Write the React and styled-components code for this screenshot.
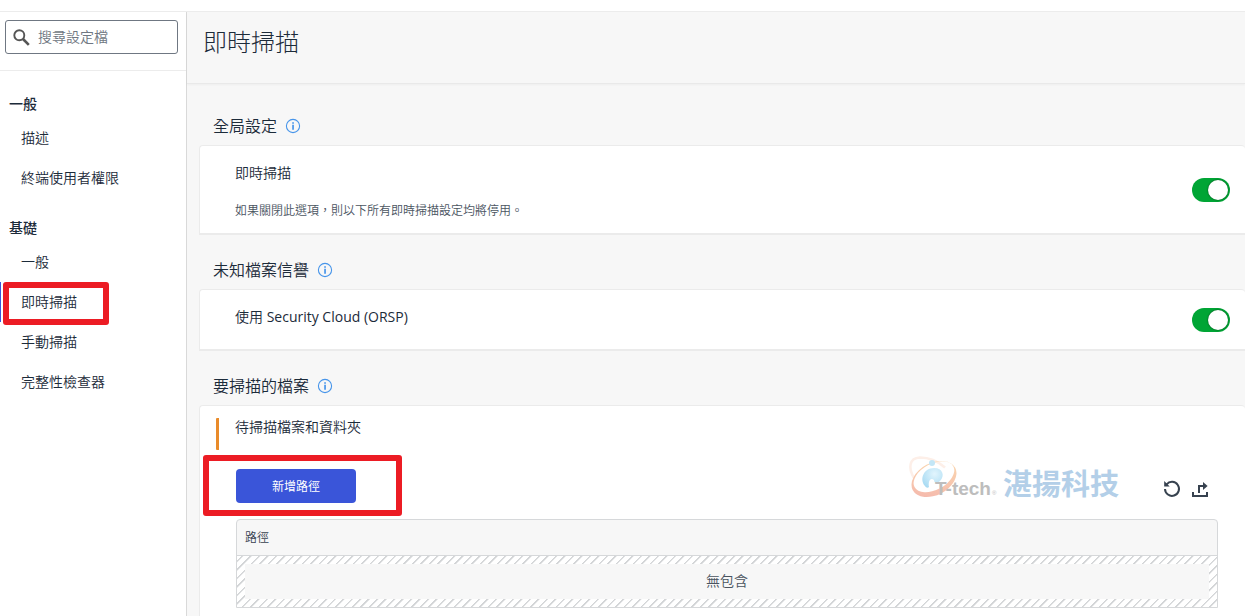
import React, { useState } from "react";
import styled, { createGlobalStyle } from "styled-components";

const GlobalStyle = createGlobalStyle`
    * {
        box-sizing: border-box;
    }
    body {
        margin: 0;
        background-color: white;
        color: #1c2b3a;
        font-family: "Open Sans", "Noto Sans CJK TC", sans-serif;
        font-size: 14px;
        font-weight: 350;
        line-height: 20px;
    }
    button, input {
        font-family: inherit;
    }
`;

const Container = styled.div`
    height: 100vh;
    display: flex;
    flex-direction: column;
    overflow: hidden;
`;

const TopBar = styled.div`
    flex: none;
    height: 12px;
    border-bottom: 1px solid #ececec;
`;

const Wrapper = styled.div`
    flex: 1;
    min-height: 0;
    display: flex;
`;

const Sidebar = styled.aside`
    flex: none;
    width: 187px;
    border-right: 1px solid #d9d9d9;
`;

const SearchBox = styled.div`
    padding: 8px 8px 16px 5px;
    border-bottom: 1px solid #ececec;
`;

const SearchField = styled.label`
    height: 34px;
    display: flex;
    align-items: center;
    gap: 8px;
    padding: 0 7px;
    border: 1px solid #6f7782;
    border-radius: 3px;
`;

const SearchInput = styled.input`
    flex: 1;
    min-width: 0;
    padding: 0 0 2px;
    border: none;
    outline: none;
    background: none;
    font-size: 14px;
    font-weight: 350;
    &::placeholder {
        color: #6f7782;
        opacity: 1;
    }
`;

const Nav = styled.nav`
    display: flex;
    flex-direction: column;
    gap: 16px;
    padding-top: 19px;
`;

const GroupTitle = styled.h2`
    margin: 0;
    padding-left: 9px;
    font-size: 14px;
    line-height: 28px;
    font-weight: 500;
`;

const List = styled.ul`
    margin: 0;
    padding: 0;
    list-style: none;
`;

const Item = styled.li`
    position: relative;
    border-left: 1px solid ${(props) => (props.$active ? "#3a55d9" : "transparent")};
`;

const ItemLink = styled.a`
    display: block;
    padding-left: 20px;
    line-height: 40px;
    color: inherit;
    text-decoration: none;
`;

const Mark = styled.span`
    position: absolute;
    top: ${(props) => props.$top}px;
    left: ${(props) => props.$left}px;
    width: ${(props) => props.$width}px;
    height: ${(props) => props.$height}px;
    border: 6px solid #ec1c24;
    border-radius: 3px;
    pointer-events: none;
`;

const Main = styled.main`
    flex: 1;
    min-width: 0;
    background-color: #f7f7f7;
`;

const Header = styled.header`
    height: 72px;
    padding: 14px 16px;
    border-bottom: 1px solid #e9e9e9;
    box-shadow: 0 1px 2px rgba(0, 0, 0, 0.04);
`;

const Title = styled.h1`
    margin: 0;
    font-size: 24px;
    line-height: 32px;
    font-weight: 300;
`;

const Content = styled.div`
    display: flex;
    flex-direction: column;
    gap: 24px;
    padding: 31px 0 0 12px;
`;

const SectionHead = styled.div`
    display: flex;
    align-items: center;
    gap: 8px;
    margin-bottom: 8px;
    padding-left: 14px;
`;

const SectionTitle = styled.h2`
    margin: 0;
    font-size: 16px;
    line-height: 22px;
    font-weight: 350;
`;

const Card = styled.div`
    position: relative;
    background-color: white;
    border: 1px solid #ebebeb;
    border-bottom-width: 2px;
    border-right: none;
    border-radius: 4px 4px 0 0;
`;

const Setting = styled.label`
    min-height: 59px;
    display: flex;
    align-items: center;
    justify-content: space-between;
    padding: 0 15px 0 35px;
`;

const SettingText = styled.span`
    align-self: flex-start;
    display: flex;
    flex-direction: column;
    gap: 18px;
    padding: 17px 0 12px;
`;

const Product = styled.span`
    font-weight: 400;
`;

const Hint = styled.span`
    font-size: 12px;
    color: #4a545f;
`;

const Switch = styled.input`
    appearance: none;
    flex: none;
    display: flex;
    align-items: center;
    width: 38px;
    height: 24px;
    margin: 0;
    padding: 0 2px;
    border-radius: 12px;
    background-color: #9aa1a9;
    cursor: pointer;
    &::before {
        content: "";
        width: 20px;
        height: 20px;
        border-radius: 50%;
        background-color: white;
        box-shadow: 0 0 2px rgba(0, 0, 0, 0.6);
    }
    &:checked {
        justify-content: flex-end;
        background-color: #00a535;
    }
`;

const FilesCard = styled(Card)`
    padding: 12px 27px 24px 16px;
`;

const FilesTitle = styled.h3`
    height: 32px;
    margin: 0 0 19px;
    padding-left: 16px;
    border-left: 3px solid #e98b2a;
    border-radius: 1px;
    font-size: 14px;
    line-height: 18px;
    font-weight: 350;
`;

const Toolbar = styled.div`
    position: relative;
    display: flex;
    align-items: center;
    justify-content: space-between;
    margin: 0 8px 16px 20px;
`;

const Button = styled.button`
    width: 120px;
    height: 34px;
    border: none;
    border-radius: 4px;
    background-color: #3a55d9;
    color: white;
    font-size: 12px;
`;

const Tools = styled.div`
    display: flex;
    gap: 8px;
    padding: 6px 1px 0 0;
`;

const IconButton = styled.button`
    display: flex;
    padding: 0;
    border: none;
    background: none;
    color: #37424f;
`;

const Watermark = styled.svg`
    position: absolute;
    top: -14px;
    right: 89px;
    pointer-events: none;
`;

const Table = styled.table`
    width: calc(100% - 20px);
    margin-left: 20px;
    border: 1px solid #d6d8da;
    border-radius: 4px 4px 0 0;
    border-spacing: 0;
    background-color: #f7f7f7;
`;

const HeadCell = styled.th`
    height: 36px;
    padding: 0 8px;
    border-bottom: 1px solid #d6d8da;
    text-align: left;
    font-size: 12px;
    font-weight: 350;
    color: #37424f;
`;

const EmptyCell = styled.td`
    padding: 8px;
    background: repeating-linear-gradient(-45deg, white 0 4px, #d3d5d7 5px 6px);
`;

const Empty = styled.div`
    padding-bottom: 2px;
    background-color: #f7f7f7;
    text-align: center;
    line-height: 33px;
    color: #4a545f;
`;

const SearchIcon = () => (
    <svg width="17" height="17" viewBox="0 0 17 17" fill="none" stroke="#555" aria-hidden="true">
        <circle cx="6.3" cy="6.3" r="5" strokeWidth="1.9" />
        <path d="M10 10l5.8 5.8" strokeWidth="2.6" />
    </svg>
);

const InfoIcon = () => (
    <svg width="16" height="16" viewBox="0 0 16 16" aria-hidden="true">
        <circle cx="8" cy="8" r="6.6" fill="none" stroke="#4795ea" strokeWidth="1.1" />
        <path d="M7.2 4.2h1.7v1.6H7.2zM7.2 6.8h1.7v4.9H7.2z" fill="#4795ea" />
    </svg>
);

const ResetIcon = () => (
    <svg width="20" height="20" viewBox="0 0 20 20" aria-hidden="true">
        <path d="M3.6 5.4A7 7 0 1 1 2 10" fill="none" stroke="currentColor" strokeWidth="2" />
        <path d="M1.200 2v5.500h5.500z" fill="currentColor" />
    </svg>
);

const ExportIcon = () => (
    <svg width="18" height="20" viewBox="0 0 18 20" aria-hidden="true">
        <path d="M2 13v4h14v-4M8 14V7h5" fill="none" stroke="currentColor" strokeWidth="2" />
        <path d="M12 3l4.600 4L12 11z" fill="currentColor" />
    </svg>
);

const Logo = () => (
    <Watermark width="214" height="48" viewBox="0 0 214 48" aria-hidden="true">
        <defs>
            <linearGradient id="ring" x1="0" y1="1" x2="1" y2="0">
                <stop offset="0" stopColor="#f4b5ad" />
                <stop offset="1" stopColor="#fbdcae" />
            </linearGradient>
            <radialGradient id="drop" cx="0.6" cy="0.3" r="0.8">
                <stop offset="0" stopColor="#e2f5fd" />
                <stop offset="1" stopColor="#a5d9f2" />
            </radialGradient>
        </defs>
        <path d="M7 23C1 13 2 3 13 2.500c8 0 17 3 25 10" fill="none" stroke="#fdefe8" strokeWidth="2.5" />
        <g transform="rotate(-28 27 24)">
            <path
                d="M3 24a24 16 0 1 0 48 0a24 16 0 1 0-48 0zM6 22a22 13 0 1 0 44 0a22 13 0 1 0-44 0z"
                fill="url(#ring)"
                fillRule="evenodd"
            />
        </g>
        <circle cx="25" cy="8" r="3" fill="#c3e6f6" />
        <path d="M18 31c-6-7-1-18 9-18 9 0 11 8 6 13-3 3-6 2-6-1-4-3-6 2-5 7-1 1-3 1-4-1z" fill="url(#drop)" />
        <text x="28" y="40" fontFamily="Liberation Sans" fontWeight="700" fontSize="19" fill="#bdbdbd">T-tech</text>
        <text x="85" y="40" fontFamily="Liberation Sans" fontSize="6" fill="#bdbdbd">®</text>
        <text x="96" y="40" fontFamily="Noto Sans CJK TC" fontWeight="700" fontSize="29" fill="#b3cfe8">湛揚科技</text>
    </Watermark>
);

const groups = [
    { title: "一般", items: ["描述", "終端使用者權限"] },
    { title: "基礎", items: ["一般", "即時掃描", "手動掃描", "完整性檢查器"] },
];

const Section = ({ title, children }) => (
    <section>
        <SectionHead>
            <SectionTitle>{title}</SectionTitle>
            <InfoIcon />
        </SectionHead>
        {children}
    </section>
);

const SwitchCard = ({ label, hint }) => {
    const [checked, setChecked] = useState(true);
    return (
        <Card>
            <Setting>
                <SettingText>
                    <span>{label}</span>
                    {hint && <Hint>{hint}</Hint>}
                </SettingText>
                <Switch type="checkbox" checked={checked} onChange={(e) => setChecked(e.target.checked)} />
            </Setting>
        </Card>
    );
};

const App = () => {
    return (
        <Container>
            <GlobalStyle />
            <TopBar />
            <Wrapper>
                <Sidebar>
                    <SearchBox>
                        <SearchField>
                            <SearchIcon />
                            <SearchInput type="text" placeholder="搜尋設定檔" aria-label="搜尋設定檔" />
                        </SearchField>
                    </SearchBox>
                    <Nav>
                        {groups.map((group) => (
                            <div key={group.title}>
                                <GroupTitle>{group.title}</GroupTitle>
                                <List>
                                    {group.items.map((item) => (
                                        <Item key={item} $active={item === "即時掃描"}>
                                            <ItemLink href="#">{item}</ItemLink>
                                            {item === "即時掃描" && <Mark $top={0} $left={2} $width={106} $height={43} />}
                                        </Item>
                                    ))}
                                </List>
                            </div>
                        ))}
                    </Nav>
                </Sidebar>
                <Main>
                    <Header>
                        <Title>即時掃描</Title>
                    </Header>
                    <Content>
                        <Section title="全局設定">
                            <SwitchCard label="即時掃描" hint="如果關閉此選項，則以下所有即時掃描設定均將停用。" />
                        </Section>
                        <Section title="未知檔案信譽">
                            <SwitchCard label={<>使用 <Product>Security Cloud (ORSP)</Product></>} />
                        </Section>
                        <Section title="要掃描的檔案">
                            <FilesCard>
                                <FilesTitle>待掃描檔案和資料夾</FilesTitle>
                                <Toolbar>
                                    <Button type="button">新增路徑</Button>
                                    <Mark $top={-14} $left={-33} $width={199} $height={61} />
                                    <Logo />
                                    <Tools>
                                        <IconButton type="button" aria-label="重設">
                                            <ResetIcon />
                                        </IconButton>
                                        <IconButton type="button" aria-label="匯出">
                                            <ExportIcon />
                                        </IconButton>
                                    </Tools>
                                </Toolbar>
                                <Table>
                                    <thead>
                                        <tr>
                                            <HeadCell>路徑</HeadCell>
                                        </tr>
                                    </thead>
                                    <tbody>
                                        <tr>
                                            <EmptyCell>
                                                <Empty>無包含</Empty>
                                            </EmptyCell>
                                        </tr>
                                    </tbody>
                                </Table>
                            </FilesCard>
                        </Section>
                    </Content>
                </Main>
            </Wrapper>
        </Container>
    );
};

export default App;
